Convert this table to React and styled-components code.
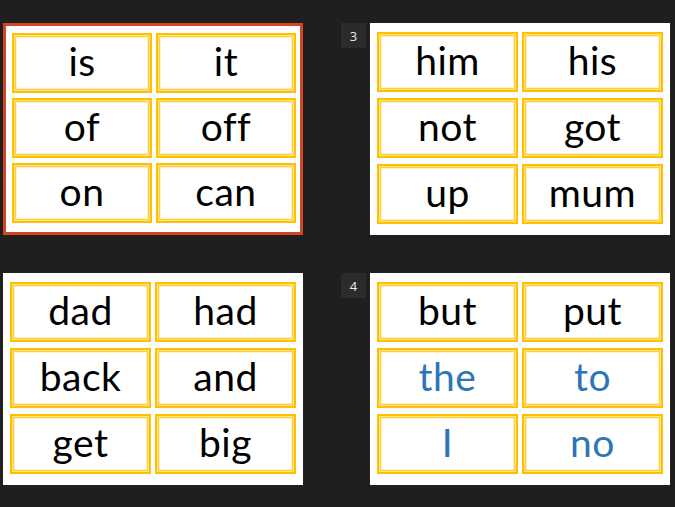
import styled, { createGlobalStyle } from 'styled-components';

const GlobalStyle = createGlobalStyle`
  html, body {
    margin: 0;
    padding: 0;
    background-color: #1f1f1f;
  }
  * {
    box-sizing: border-box;
  }
`;

const SorterContainer = styled.main`
  width: 675px;
  height: 507px;
  overflow: hidden;
  background-color: #1f1f1f;
  padding: 23px 0 0 3px;
  display: grid;
  grid-template-columns: 300px 329px;
  grid-auto-rows: 212px;
  column-gap: 38px;
  row-gap: 38px;
`;

const SlideItem = styled.div`
  display: flex;
  align-items: flex-start;
  gap: 4px;
`;

const SlideNumber = styled.div`
  width: 25px;
  height: 25px;
  background-color: #2b2b2b;
  color: #ececec;
  font-family: 'Open Sans', 'Noto Sans', sans-serif;
  font-size: 13px;
  display: flex;
  align-items: center;
  justify-content: center;
`;

const Slide = styled.div`
  width: 300px;
  height: 212px;
  background-color: #ffffff;
  display: grid;
  grid-template-columns: 141px 141px;
  grid-auto-rows: 60px;
  column-gap: 4px;
  row-gap: 6px;
  padding: 9px 7px 0 7px;
  ${({ $selected }) =>
    $selected &&
    `
    border: 3px solid #d3461f;
    grid-template-columns: 140px 140px;
    row-gap: 5px;
    padding: 7px 6px 0 6px;
  `}
`;

const WordCard = styled.div`
  border: 2px solid #ffc000;
  box-shadow: inset 0 0 0 1px #ffe38a, inset 0 0 0 2px #ffcf3a,
    inset 0 0 0 3px #fff1c4;
  background-color: #ffffff;
  display: flex;
  justify-content: center;
  font-family: Lato, 'Open Sans', sans-serif;
  font-weight: 400;
  font-size: 39px;
  line-height: 53px;
  letter-spacing: 0.5px;
  color: ${({ $tricky }) => ($tricky ? '#2e75b6' : '#000000')};
`;

const slides = [
  { id: 1, selected: true, words: ['is', 'it', 'of', 'off', 'on', 'can'] },
  { id: 3, number: 3, words: ['him', 'his', 'not', 'got', 'up', 'mum'] },
  { id: 2, words: ['dad', 'had', 'back', 'and', 'get', 'big'] },
  {
    id: 4,
    number: 4,
    words: ['but', 'put', 'the', 'to', 'I', 'no'],
    tricky: ['the', 'to', 'I', 'no'],
  },
];

const App = () => {
  return (
    <>
      <GlobalStyle />
      <SorterContainer>
        {slides.map((slide) => (
          <SlideItem key={slide.id}>
            {slide.number && <SlideNumber>{slide.number}</SlideNumber>}
            <Slide $selected={slide.selected}>
              {slide.words.map((word) => (
                <WordCard
                  key={word}
                  $tricky={slide.tricky && slide.tricky.includes(word)}
                >
                  {word}
                </WordCard>
              ))}
            </Slide>
          </SlideItem>
        ))}
      </SorterContainer>
    </>
  );
};

export default App;
